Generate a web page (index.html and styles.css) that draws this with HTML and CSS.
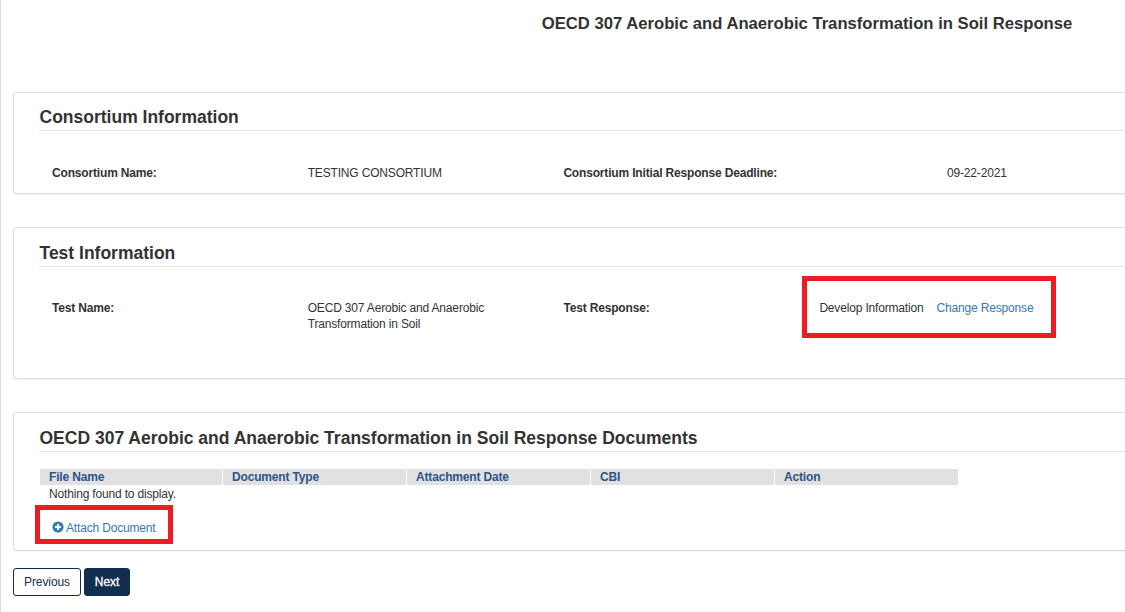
FILE: index.html
```html
<!DOCTYPE html>
<html lang="en">
<head>
    <meta charset="UTF-8">
    <meta name="viewport" content="width=device-width, initial-scale=1.0">
    <title>OECD 307 Aerobic and Anaerobic Transformation in Soil Response</title>
    <link rel="stylesheet" href="styles.css">
</head>
<body>
    <div class="page">
        <h1 class="page-title">OECD 307 Aerobic and Anaerobic Transformation in Soil Response</h1>

        <section class="panel consortium">
            <h2>Consortium Information</h2>
            <div class="row">
                <div class="label">Consortium Name:</div>
                <div class="value">TESTING CONSORTIUM</div>
                <div class="label">Consortium Initial Response Deadline:</div>
                <div class="value">09-22-2021</div>
            </div>
        </section>

        <section class="panel test">
            <h2>Test Information</h2>
            <div class="row">
                <div class="label">Test Name:</div>
                <div class="value">OECD 307 Aerobic and Anaerobic Transformation in Soil</div>
                <div class="label">Test Response:</div>
                <div class="value response">
                    <span>Develop Information</span>
                    <a href="#">Change Response</a>
                </div>
            </div>
        </section>

        <section class="panel documents">
            <h2>OECD 307 Aerobic and Anaerobic Transformation in Soil Response Documents</h2>
            <table>
                <thead>
                    <tr>
                        <th class="file-col">File Name</th>
                        <th>Document Type</th>
                        <th>Attachment Date</th>
                        <th>CBI</th>
                        <th>Action</th>
                    </tr>
                </thead>
                <tbody>
                    <tr>
                        <td colspan="5">Nothing found to display.</td>
                    </tr>
                </tbody>
            </table>
            <a href="#" class="attach">
                <svg class="icon" viewBox="0 0 12 12" width="12" height="12">
                    <circle cx="6" cy="6" r="5.6" fill="currentColor"/>
                    <path d="M6 3v6M3 6h6" stroke="#fff" stroke-width="2"/>
                </svg>
                <span>Attach Document</span>
            </a>
        </section>

        <div class="buttons">
            <button type="button" class="btn">Previous</button>
            <button type="button" class="btn btn-primary">Next</button>
        </div>
    </div>
</body>
</html>
```
FILE: styles.css
```css
*, *::before {
    box-sizing: border-box;
}
body {
    margin: 0;
    background: #fff;
    color: #333;
    font-family: "Liberation Sans", Arial, sans-serif;
    font-size: 12px;
    line-height: 16px;
    letter-spacing: -0.17px;
}
a {
    color: #337ab7;
    text-decoration: none;
}
.page {
    min-height: 612px;
    padding: 12px 0 0 12px;
    border-left: 1px solid #ddd;
}
.page-title {
    height: 22px;
    margin: 0 0 58px;
    padding-left: 476px;
    font-size: 16.65px;
    line-height: 24px;
    letter-spacing: normal;
    text-align: center;
}
/* panels are open on the right, up to the window edge */
.panel {
    margin-bottom: 33px;
    padding: 13px 0 0 25px;
    border: 1px solid #ddd;
    border-right: none;
    border-radius: 4px 0 0 4px;
    box-shadow: 0 1px 1px rgba(0, 0, 0, 0.05);
}
.panel h2 {
    height: 25px;
    margin: 0;
    padding-left: 0.5px;
    border-bottom: 1px solid #e5e5e5;
    font-size: 17.5px;
    line-height: 22px;
    letter-spacing: normal;
}
.consortium {
    height: 102px;
}
.test {
    height: 152px;
    padding-top: 14px;
}
.documents {
    height: 139px;
    padding-top: 14px;
    margin-bottom: 17px;
}
.row {
    display: grid;
    grid-template-columns: 255.7px 255.7px 383.6px 1fr;
    padding: 34px 0 0 13px;
}
.test .row {
    grid-template-columns: 255.7px 255.7px 256px 1fr;
    padding-top: 33px;
}
.value {
    padding-right: 50px;
}
.label {
    font-weight: bold;
}
.response {
    position: relative;
    display: flex;
    gap: 13px;
}
/* red callout frames */
.response::before,
.attach::before {
    content: "";
    position: absolute;
    border: 5px solid #ed1c24;
    pointer-events: none;
}
.response::before {
    top: -24px;
    left: -17.4px;
    width: 254px;
    height: 62px;
}
table {
    width: 920px;
    margin-top: 16px;
    table-layout: fixed;
    border-collapse: separate;
    border-spacing: 1px;
}
th, td {
    height: 16px;
    padding: 0 9px;
    text-align: left;
}
th {
    background: #e1e1e1;
    color: #2e5489;
}
.file-col {
    width: 182px;
}
.attach {
    position: relative;
    display: inline-flex;
    align-items: center;
    gap: 2px;
    margin: 17px 0 0 13px;
}
.attach .icon {
    margin-top: -2px;
}
.attach::before {
    top: -15px;
    left: -17px;
    width: 138px;
    height: 39px;
}
.buttons {
    display: flex;
    gap: 3px;
}
.btn {
    width: 68px;
    height: 28px;
    padding: 0;
    border: 1px solid #112e51;
    border-radius: 3px;
    background: #fff;
    color: #112e51;
    font-family: inherit;
    font-size: 12px;
    letter-spacing: -0.1px;
}
.btn-primary {
    width: 46px;
    background: #112e51;
    color: #fff;
    -webkit-text-stroke: 0.3px #fff;
}
```
